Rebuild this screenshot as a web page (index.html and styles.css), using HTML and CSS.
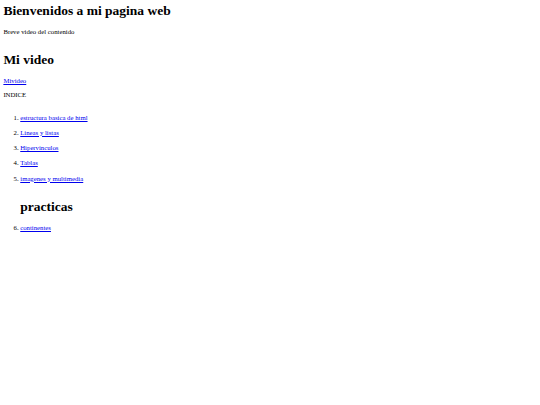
FILE: index.html
```html
<!DOCTYPE html>
<html lang="es">
<head>
  <meta charset="UTF-8">
  <meta name="viewport" content="width=device-width, initial-scale=1.0">
  <title>Mi pagina web</title>
  <link rel="stylesheet" href="styles.css">
</head>
<body>
  <h1 class="title">Bienvenidos a mi pagina web</h1>
  <p>Breve video del contenido</p>

  <h1 class="spaced">Mi video</h1>
  <p><a href="#">Mivideo</a></p>
  <p>INDICE</p>

  <ol class="indice">
    <li><a href="#">estructura basica de html</a></li>
    <li><a href="#">Lineas y listas</a></li>
    <li><a href="#">Hipervinculos</a></li>
    <li><a href="#">Tablas</a></li>
    <li><a href="#">imagenes y multimedia</a></li>
    <h1 class="spaced">practicas</h1>
    <li><a href="#">continentes</a></li>
  </ol>
</body>
</html>
```

FILE: styles.css
```css
body {
  font-family: "Liberation Serif", "Times New Roman", serif;
  font-size: 6.75px;
  line-height: 7.76px;
  color: #000;
  margin: 3.375px;
}
h1 {
  font-size: 13.5px;
  line-height: 15.5px;
  font-weight: bold;
  margin: 9px 0;
}
.title {
  margin-top: 0;
}
.spaced {
  margin-top: 16.8px;
}
p {
  margin: 6.75px 0;
}
a {
  color: #0000ee;
}
.indice {
  margin: 14.5px 0 6.75px;
  padding-left: 16.875px;
}
.indice li {
  margin: 7.45px 0;
}
```
